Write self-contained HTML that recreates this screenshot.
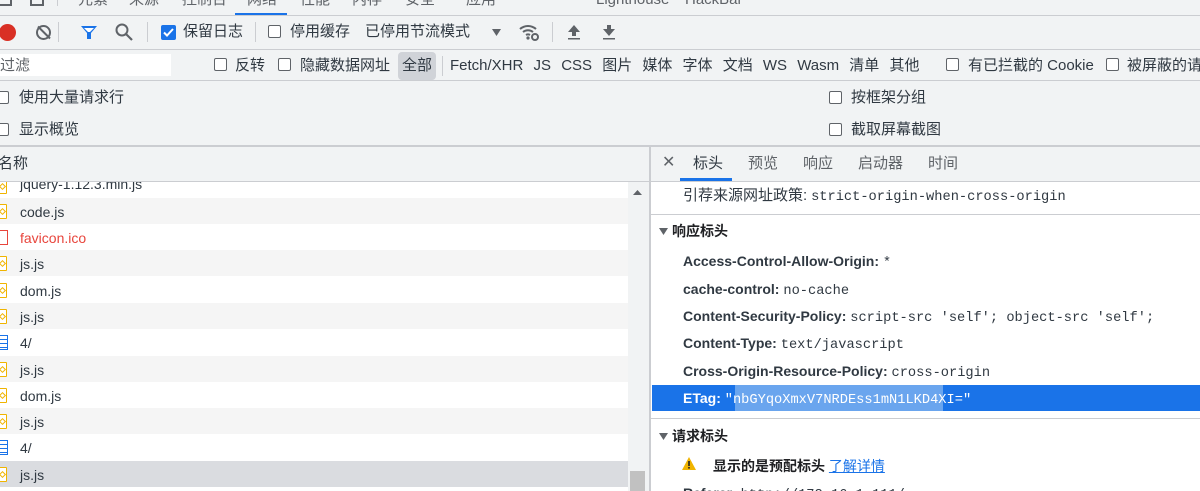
<!DOCTYPE html>
<html style="overflow:hidden;height:491px"><head><meta charset="utf-8"><style>
*{margin:0;padding:0;box-sizing:border-box}
body{width:1200px;height:491px;overflow:hidden;background:#f1f3f4;font-family:"Liberation Sans","Noto Sans CJK SC",sans-serif;font-size:14px;color:#303942;position:relative}
.a{position:absolute;white-space:nowrap}
.t{line-height:18px}
.hl{position:absolute;left:0;right:0;height:1px;background:#cbcdd1}
.cb{position:absolute;width:13px;height:13px;border:1px solid #5f6368;border-radius:2px;background:#fff}
.mono{font-family:"Liberation Mono","DejaVu Sans Mono",monospace;font-size:13.7px}
.row{position:absolute;left:0;width:628px;height:26.3px}
.fi{position:absolute;left:-3px;width:10px;height:15px;border:1.5px solid #f0b400;border-radius:1px;background:#fff}
.fi:after{content:"";position:absolute;left:2px;top:4px;width:3px;height:3px;border:1px solid #f0b400;transform:rotate(45deg)}
.nm{position:absolute;left:20px;top:6px;font-size:14px;color:#303942}
.k{font-weight:bold;color:#303942}
</style></head><body>
<!-- top tab bar -->
<div class="a t" style="top:-9px;left:0;color:#5f6368;font-size:15px;width:1200px;height:24px">
<span class="a" style="left:78px">元素</span><span class="a" style="left:129px">来源</span><span class="a" style="left:182px">控制台</span><span class="a" style="left:247px">网络</span><span class="a" style="left:300px">性能</span><span class="a" style="left:352px">内存</span><span class="a" style="left:405px">安全</span><span class="a" style="left:466px">应用</span><span class="a" style="left:596px">Lighthouse</span><span class="a" style="left:685px">HackBar</span></div>
<div class="a" style="left:0;top:0;width:12px;height:6px;border-right:2px solid #5f6368;border-bottom:2px solid #5f6368"></div>
<div class="a" style="left:30px;top:-2px;width:14px;height:8px;border:2px solid #5f6368;border-top:none"></div>
<div class="a" style="left:57px;top:0;width:1px;height:6px;background:#cbcdd1"></div>
<div class="a" style="left:235px;top:13px;width:52px;height:3px;background:#1a73e8"></div>
<div class="hl" style="top:15px"></div>
<!-- toolbar -->
<div class="a" style="top:24px;width:17px;height:17px;border-radius:50%;background:#d93025;left:-1px"></div>
<div class="a" style="left:36px;top:25px;width:15px;height:15px;border-radius:50%;border:2px solid #5f6368"></div>
<div class="a" style="left:43px;top:24px;width:2px;height:17px;background:#5f6368;transform:rotate(-45deg)"></div>
<div class="a" style="left:58px;top:22px;width:1px;height:20px;background:#cbcdd1"></div>
<svg class="a" style="left:80px;top:24px" width="18" height="17"><path d="M1 2h16l-6 7v6h-4v-6z" fill="#1a73e8"/><path d="M4 4h10l-4 4h-2z" fill="#fff"/></svg>
<svg class="a" style="left:115px;top:23px" width="19" height="19"><circle cx="7" cy="7" r="5.5" fill="none" stroke="#5f6368" stroke-width="2"/><path d="M11 11l6 6" stroke="#5f6368" stroke-width="2.2"/></svg>
<div class="a" style="left:147px;top:22px;width:1px;height:20px;background:#cbcdd1"></div>
<div class="a" style="left:161px;top:25px;width:15px;height:15px;border-radius:2px;background:#1a73e8"></div>
<svg class="a" style="left:161px;top:25px" width="15" height="15"><path d="M3 7.5l3 3 6-6.5" stroke="#fff" stroke-width="2" fill="none"/></svg>
<span class="a t" style="left:183px;top:23px;font-size:15px">保留日志</span>
<div class="a" style="left:255px;top:22px;width:1px;height:20px;background:#cbcdd1"></div>
<div class="cb" style="left:268px;top:25px"></div>
<span class="a t" style="left:290px;top:23px;font-size:15px">停用缓存</span>
<span class="a t" style="left:365px;top:23px;font-size:15px">已停用节流模式</span>
<svg class="a" style="left:491px;top:28px" width="12" height="9"><path d="M1 1h9l-4.5 7z" fill="#5f6368"/></svg>
<svg class="a" style="left:519px;top:22px" width="22" height="20"><path d="M1 7a12 12 0 0 1 16 0M4 10a8 8 0 0 1 10 0M7 13a4 4 0 0 1 4 0" stroke="#5f6368" stroke-width="2" fill="none"/><circle cx="9" cy="16" r="1.6" fill="#5f6368"/><circle cx="16" cy="15" r="3" fill="none" stroke="#5f6368" stroke-width="2"/></svg>
<div class="a" style="left:552px;top:22px;width:1px;height:20px;background:#cbcdd1"></div>
<svg class="a" style="left:567px;top:24px" width="14" height="16"><path d="M7 1l6 7h-4v4h-4v-4h-4z" fill="#5f6368"/><rect x="1" y="14" width="12" height="1.5" fill="#5f6368"/></svg>
<svg class="a" style="left:602px;top:24px" width="14" height="16"><path d="M7 12l6-7h-4v-4h-4v4h-4z" fill="#5f6368"/><rect x="1" y="14" width="12" height="1.5" fill="#5f6368"/></svg>
<div class="hl" style="top:49px"></div>
<!-- filter row -->
<div class="a" style="left:0;top:54px;width:171px;height:22px;background:#fff"></div>
<span class="a t" style="left:0;top:57px;font-size:15px;color:#5f6368">过滤</span>
<div class="cb" style="left:214px;top:58px"></div><span class="a t" style="left:235px;top:57px;font-size:15px">反转</span>
<div class="cb" style="left:278px;top:58px"></div><span class="a t" style="left:300px;top:57px;font-size:15px">隐藏数据网址</span>
<div class="a" style="left:398px;top:52px;width:38px;height:28px;border-radius:4px;background:#d0d3d8"></div>
<span class="a t" style="left:402px;top:57px;font-size:15px">全部</span>
<div class="a" style="left:442px;top:56px;width:1px;height:20px;background:#cbcdd1"></div>
<span class="a t" style="left:450px;top:57px;font-size:15px;word-spacing:6px">Fetch/XHR JS CSS 图片 媒体 字体 文档 WS Wasm 清单 其他</span>
<div class="cb" style="left:946px;top:58px"></div><span class="a t" style="left:968px;top:57px;font-size:15px">有已拦截的 Cookie</span>
<div class="cb" style="left:1106px;top:58px"></div><span class="a t" style="left:1127px;top:57px;font-size:15px">被屏蔽的请</span>
<div class="hl" style="top:80px"></div>
<!-- options -->
<div class="cb" style="left:-4px;top:91px"></div><span class="a t" style="left:19px;top:89px;font-size:15px">使用大量请求行</span>
<div class="cb" style="left:-4px;top:123px"></div><span class="a t" style="left:19px;top:121px;font-size:15px">显示概览</span>
<div class="cb" style="left:829px;top:91px"></div><span class="a t" style="left:851px;top:89px;font-size:15px">按框架分组</span>
<div class="cb" style="left:829px;top:123px"></div><span class="a t" style="left:851px;top:121px;font-size:15px">截取屏幕截图</span>
<div class="a" style="left:0;top:145px;width:1200px;height:2px;background:#cbcdd1"></div>
<!-- left pane -->
<span class="a t" style="left:-2px;top:155px;font-size:15px">名称</span>
<div class="a" style="left:0;top:182px;width:628px;height:309px;background:#fff;overflow:hidden">
<div class="row" style="top:-10px;background:#fff"><div class="fi" style="top:7px"></div><span class="nm" style="top:4px">jquery-1.12.3.min.js</span></div>
<div class="row" style="top:16px;background:#f5f5f5"><div class="fi" style="top:6px"></div><span class="nm">code.js</span></div>
<div class="row" style="top:42px"><div class="a" style="left:-3px;top:6px;width:11px;height:15px;border:1.5px solid #e8453c"></div><span class="nm" style="color:#e8453c">favicon.ico</span></div>
<div class="row" style="top:68px;background:#f5f5f5"><div class="fi" style="top:6px"></div><span class="nm">js.js</span></div>
<div class="row" style="top:95px"><div class="fi" style="top:6px"></div><span class="nm">dom.js</span></div>
<div class="row" style="top:121px;background:#f5f5f5"><div class="fi" style="top:6px"></div><span class="nm">js.js</span></div>
<div class="row" style="top:147px"><div class="a" style="left:-3px;top:6px;width:11px;height:15px;border:1.5px solid #1a73e8;background:repeating-linear-gradient(#fff 0 3px,#1a73e8 3px 4px)"></div><span class="nm">4/</span></div>
<div class="row" style="top:174px;background:#f5f5f5"><div class="fi" style="top:6px"></div><span class="nm">js.js</span></div>
<div class="row" style="top:200px"><div class="fi" style="top:6px"></div><span class="nm">dom.js</span></div>
<div class="row" style="top:226px;background:#f5f5f5"><div class="fi" style="top:6px"></div><span class="nm">js.js</span></div>
<div class="row" style="top:252px"><div class="a" style="left:-3px;top:6px;width:11px;height:15px;border:1.5px solid #1a73e8;background:repeating-linear-gradient(#fff 0 3px,#1a73e8 3px 4px)"></div><span class="nm">4/</span></div>
<div class="row" style="top:279px;background:#dadce0"><div class="fi" style="top:6px"></div><span class="nm">js.js</span></div>
</div>
<div class="a" style="left:0;top:181px;width:650px;height:1px;background:#cbcdd1"></div>
<div class="a" style="left:628px;top:182px;width:21px;height:309px;background:#f1f3f4"></div>
<svg class="a" style="left:633px;top:189px" width="10" height="7"><path d="M0 6h9l-4.5-5z" fill="#5f6368"/></svg>
<div class="a" style="left:630px;top:471px;width:15px;height:20px;background:#c1c1c1"></div>
<div class="a" style="left:649px;top:147px;width:2px;height:344px;background:#cbcdd1"></div>
<!-- right pane -->
<div class="a" style="left:651px;top:147px;width:549px;height:34px;background:#f1f3f4"></div>
<span class="a t" style="left:662px;top:154px;font-size:16px;color:#5f6368">✕</span>
<span class="a t" style="left:693px;top:155px;font-size:15px">标头</span>
<div class="a" style="left:680px;top:178px;width:52px;height:3px;background:#1a73e8"></div>
<span class="a t" style="left:748px;top:155px;font-size:15px;color:#5f6368">预览</span>
<span class="a t" style="left:803px;top:155px;font-size:15px;color:#5f6368">响应</span>
<span class="a t" style="left:858px;top:155px;font-size:15px;color:#5f6368">启动器</span>
<span class="a t" style="left:928px;top:155px;font-size:15px;color:#5f6368">时间</span>
<div class="a" style="left:651px;top:181px;width:549px;height:1px;background:#cbcdd1"></div>
<div class="a" style="left:651px;top:182px;width:549px;height:309px;background:#fff;overflow:hidden">
<span class="a t" style="left:32px;top:4px"><span style="font-size:15px">引荐来源网址政策:</span> <span class="mono">strict-origin-when-cross-origin</span></span>
<div class="a" style="left:0;top:32px;width:549px;height:1px;background:#cbcdd1"></div>
<svg class="a" style="left:8px;top:46px" width="10" height="8"><path d="M0 0h9l-4.5 7z" fill="#5f6368"/></svg>
<span class="a t" style="left:21px;top:40px;font-weight:bold;color:#202124">响应标头</span>
<span class="a t" style="left:32px;top:70px"><span class="k">Access-Control-Allow-Origin:</span> <span class="mono">*</span></span>
<span class="a t" style="left:32px;top:98px"><span class="k">cache-control:</span> <span class="mono">no-cache</span></span>
<span class="a t" style="left:32px;top:125px"><span class="k">Content-Security-Policy:</span> <span class="mono">script-src 'self'; object-src 'self';</span></span>
<span class="a t" style="left:32px;top:152px"><span class="k">Content-Type:</span> <span class="mono">text/javascript</span></span>
<span class="a t" style="left:32px;top:180px"><span class="k">Cross-Origin-Resource-Policy:</span> <span class="mono">cross-origin</span></span>
<div class="a" style="left:1px;top:203px;width:548px;height:26px;background:#1a73e8"></div>
<div class="a" style="left:84px;top:203px;width:208px;height:26px;background:#6aa5ee"></div>
<span class="a t" style="left:32px;top:207px;color:#fff"><span style="font-weight:bold">ETag:</span> <span class="mono">"nbGYqoXmxV7NRDEss1mN1LKD4XI="</span></span>
<div class="a" style="left:0;top:236px;width:549px;height:1px;background:#cbcdd1"></div>
<svg class="a" style="left:8px;top:251px" width="10" height="8"><path d="M0 0h9l-4.5 7z" fill="#5f6368"/></svg>
<span class="a t" style="left:21px;top:245px;font-weight:bold;color:#202124">请求标头</span>
<svg class="a" style="left:31px;top:275px" width="14" height="13"><path d="M7 0l7 13h-14z" fill="#f0b400"/><rect x="6.2" y="4" width="1.6" height="5" fill="#202124"/><rect x="6.2" y="10" width="1.6" height="1.6" fill="#202124"/></svg>
<span class="a t" style="left:62px;top:275px;font-weight:bold;color:#202124">显示的是预配标头 <span style="color:#1a73e8;font-weight:normal;text-decoration:underline">了解详情</span></span>
<span class="a t" style="left:32px;top:302px"><span class="k">Referer:</span> <span class="mono">http://172.16.1.111/</span></span>
</div>
</body></html>
